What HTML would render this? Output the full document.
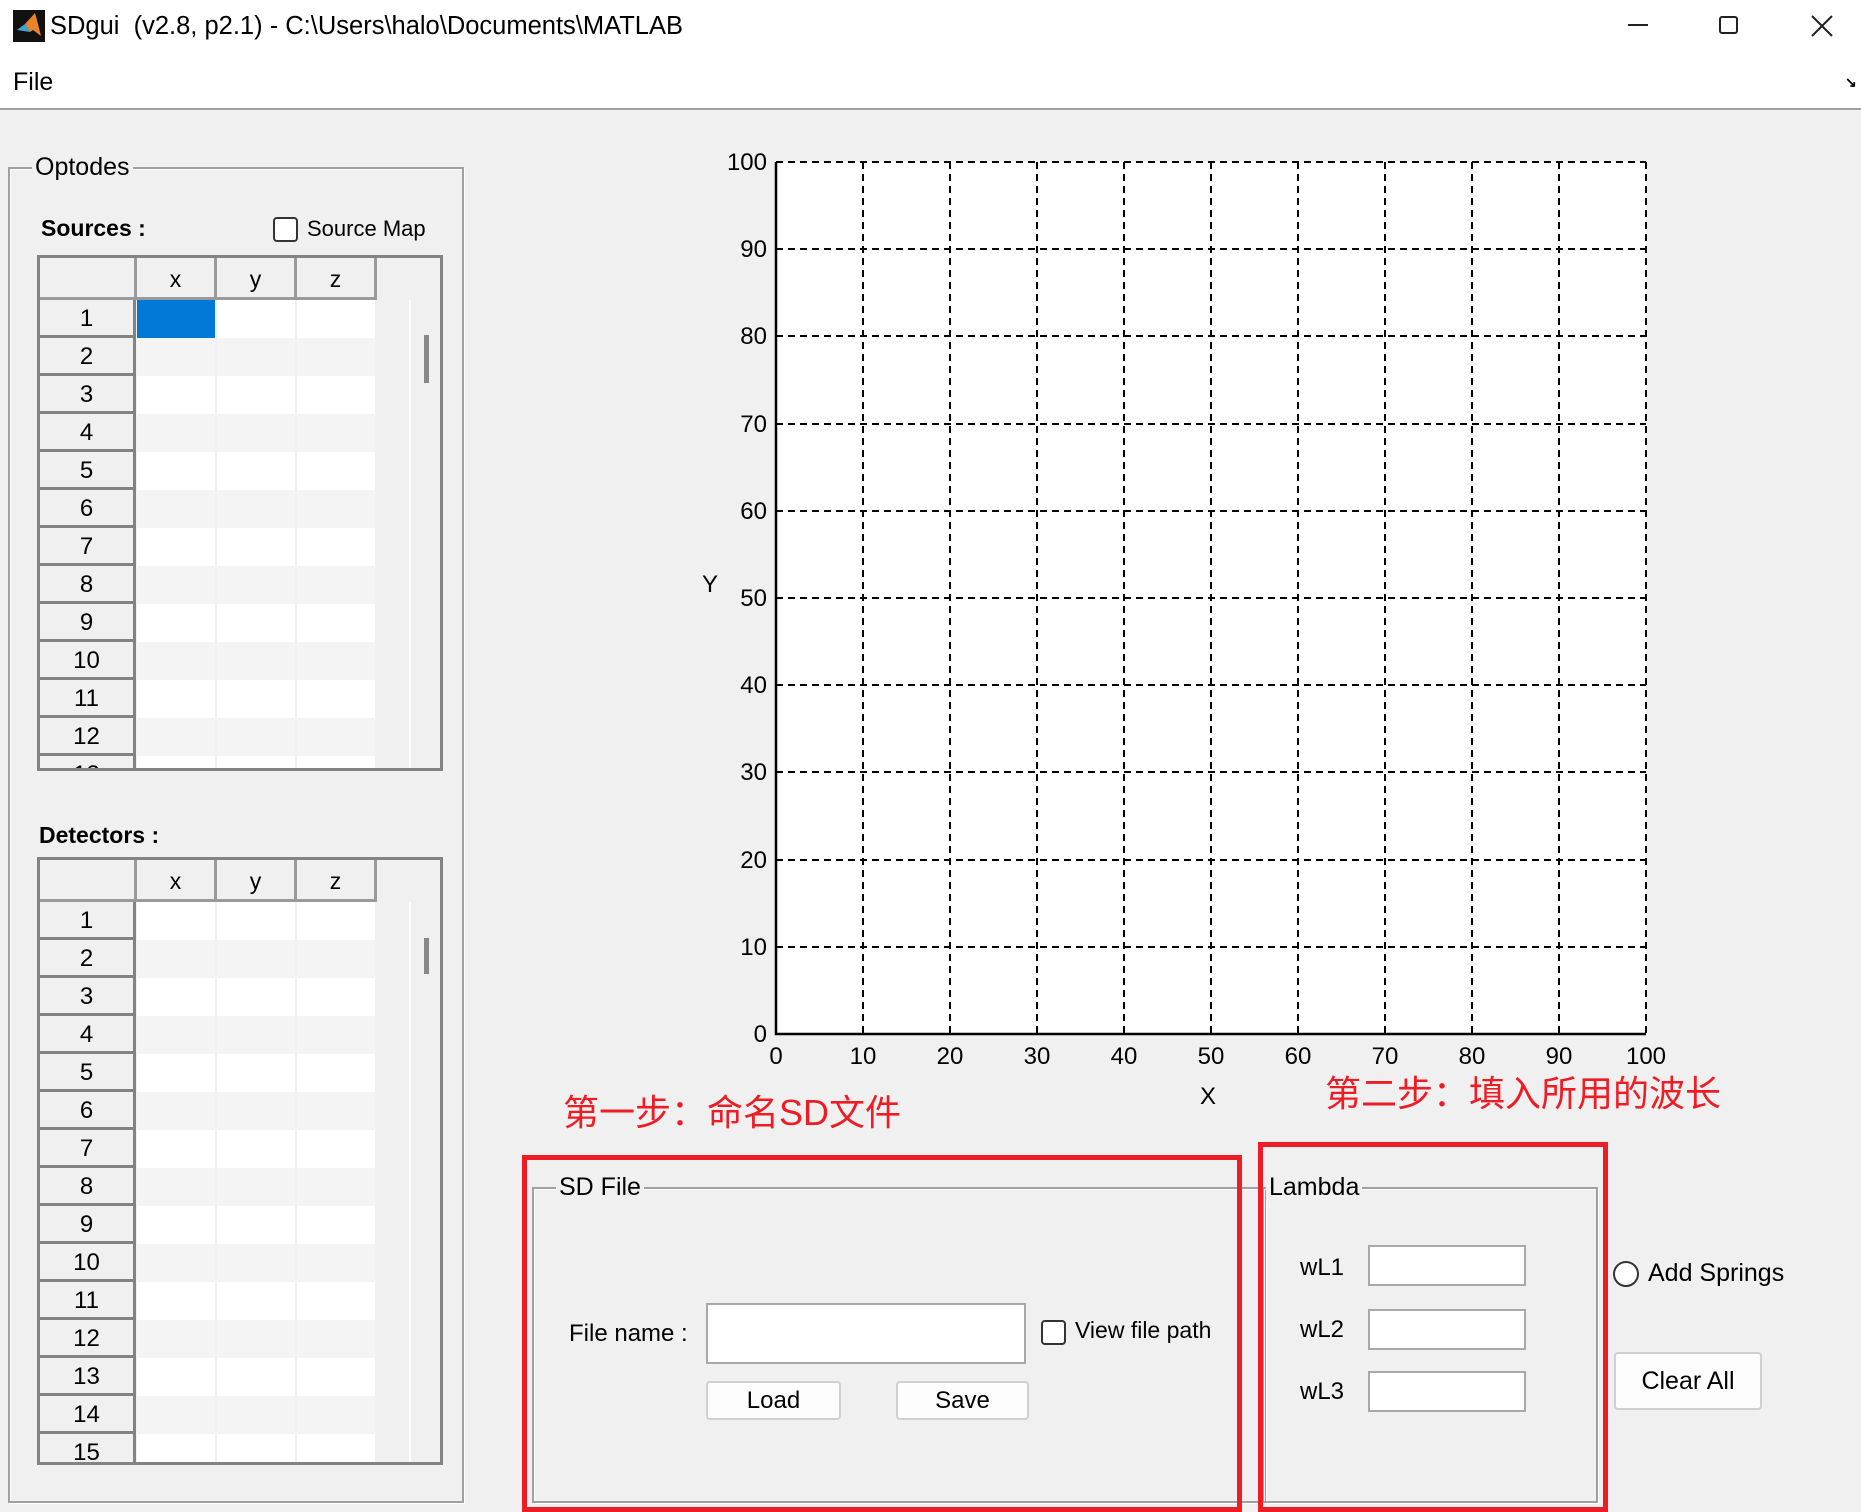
<!DOCTYPE html>
<html><head><meta charset="utf-8"><style>
*{box-sizing:border-box;margin:0;padding:0}
body{width:1861px;height:1512px;background:#f0f0f0;position:relative;overflow:hidden;font-family:"Liberation Sans",Arial,sans-serif;color:#000}
.a{position:absolute}
.gb{position:absolute;border:2px solid #a0a0a0;border-right-color:#a0a0a0;box-shadow:inset 1px 1px 0 #fff,1px 1px 0 #fff}
.gl{position:absolute;background:#f0f0f0;padding:0 3px;font-size:25px;line-height:28px}
.tbl{position:absolute;border:3px solid #838383;background:#f0f0f0;overflow:hidden}
.hd{position:absolute;top:0;height:42px;border-right:3px solid #9a9a9a;border-bottom:3px solid #9a9a9a;font-size:23px;text-align:center;line-height:42px;background:#f0f0f0}
.row{position:absolute;left:0;height:38px;width:340px}
.rn{position:absolute;left:0;top:0;width:96px;height:38px;border-right:3px solid #838383;border-bottom:3px solid #838383;font-size:24px;text-align:center;line-height:38px;background:#f0f0f0}
.c{position:absolute;top:0;height:38px;width:78px;background:#fff}
.row.o .c{background:#f4f4f4}
.inp{position:absolute;background:#fff;border:2px solid #a8a8a8}
.btn{position:absolute;background:#fdfdfd;border:2px solid #d0d0d0;border-radius:4px;font-size:24px;text-align:center}
.cb{position:absolute;width:25px;height:25px;border:2px solid #333;border-radius:4px;background:#fff}
.red{position:absolute;border:5px solid #ee1c25}
.cn{position:absolute;font-size:36px;color:#ee1c25;font-family:'Liberation Sans','Noto Sans CJK SC',sans-serif;line-height:44px}
</style></head><body>
<div class="a" style="left:0;top:0;width:1861px;height:108px;background:#fff"></div>
<div class="a" style="left:0;top:108px;width:1861px;height:2px;background:#a0a0a0"></div>
<svg class="a" style="left:13px;top:10px" width="32" height="32" viewBox="0 0 32 32"><rect width="32" height="32" fill="#111"/><path d="M4 20 L12 14 L17 22 Z" fill="#3aa6d8"/><path d="M12 14 L22 3 L28 26 L20 20 L17 22 Z" fill="#e8822a"/><path d="M22 3 L28 26 L24 12Z" fill="#f7b233"/></svg>
<div class="a" style="left:50px;top:10px;font-size:25.5px;line-height:32px">SDgui&nbsp; (v2.8, p2.1) - C:\Users\halo\Documents\MATLAB</div>
<div class="a" style="left:1628px;top:24px;width:20px;height:2px;background:#222"></div>
<div class="a" style="left:1719px;top:16px;width:19px;height:18px;border:2px solid #222;border-radius:3px"></div>
<svg class="a" style="left:1811px;top:15px" width="22" height="22"><path d="M1 1L21 21M21 1L1 21" stroke="#222" stroke-width="2"/></svg>
<div class="a" style="left:13px;top:67px;font-size:25px;line-height:30px">File</div>
<div class="a" style="left:1845px;top:74px;font-size:14px;font-weight:bold">↘</div>

<div class="gb" style="left:8px;top:167px;width:456px;height:1336px"></div>
<div class="gl" style="left:32px;top:153px">Optodes</div>
<div class="a" style="left:41px;top:215px;font-size:23px;font-weight:bold">Sources :</div>
<div class="cb" style="left:273px;top:217px"></div>
<div class="a" style="left:307px;top:216px;font-size:22px">Source Map</div>

<div class="tbl" style="left:37px;top:255px;width:406px;height:516px">
<div class="hd" style="left:0;width:97px"></div><div class="hd" style="left:97px;width:80px">x</div><div class="hd" style="left:177px;width:80px">y</div><div class="hd" style="left:257px;width:80px">z</div>
<div class="a" style="left:369px;top:42px;width:2px;height:480px;background:#fff"></div>
<div class="a" style="left:384px;top:77px;width:5px;height:48px;background:#888"></div>
<div class="row" style="top:42px"><div class="rn">1</div><div class="c" style="left:97px;background:#0078d7"></div><div class="c" style="left:177px"></div><div class="c" style="left:257px"></div></div>
<div class="row o" style="top:80px"><div class="rn">2</div><div class="c" style="left:97px"></div><div class="c" style="left:177px"></div><div class="c" style="left:257px"></div></div>
<div class="row" style="top:118px"><div class="rn">3</div><div class="c" style="left:97px"></div><div class="c" style="left:177px"></div><div class="c" style="left:257px"></div></div>
<div class="row o" style="top:156px"><div class="rn">4</div><div class="c" style="left:97px"></div><div class="c" style="left:177px"></div><div class="c" style="left:257px"></div></div>
<div class="row" style="top:194px"><div class="rn">5</div><div class="c" style="left:97px"></div><div class="c" style="left:177px"></div><div class="c" style="left:257px"></div></div>
<div class="row o" style="top:232px"><div class="rn">6</div><div class="c" style="left:97px"></div><div class="c" style="left:177px"></div><div class="c" style="left:257px"></div></div>
<div class="row" style="top:270px"><div class="rn">7</div><div class="c" style="left:97px"></div><div class="c" style="left:177px"></div><div class="c" style="left:257px"></div></div>
<div class="row o" style="top:308px"><div class="rn">8</div><div class="c" style="left:97px"></div><div class="c" style="left:177px"></div><div class="c" style="left:257px"></div></div>
<div class="row" style="top:346px"><div class="rn">9</div><div class="c" style="left:97px"></div><div class="c" style="left:177px"></div><div class="c" style="left:257px"></div></div>
<div class="row o" style="top:384px"><div class="rn">10</div><div class="c" style="left:97px"></div><div class="c" style="left:177px"></div><div class="c" style="left:257px"></div></div>
<div class="row" style="top:422px"><div class="rn">11</div><div class="c" style="left:97px"></div><div class="c" style="left:177px"></div><div class="c" style="left:257px"></div></div>
<div class="row o" style="top:460px"><div class="rn">12</div><div class="c" style="left:97px"></div><div class="c" style="left:177px"></div><div class="c" style="left:257px"></div></div>
<div class="row" style="top:498px"><div class="rn">13</div><div class="c" style="left:97px"></div><div class="c" style="left:177px"></div><div class="c" style="left:257px"></div></div>
</div>

<div class="a" style="left:39px;top:822px;font-size:23px;font-weight:bold">Detectors :</div>
<div class="tbl" style="left:37px;top:857px;width:406px;height:608px">
<div class="hd" style="left:0;width:97px"></div><div class="hd" style="left:97px;width:80px">x</div><div class="hd" style="left:177px;width:80px">y</div><div class="hd" style="left:257px;width:80px">z</div>
<div class="a" style="left:369px;top:42px;width:2px;height:600px;background:#fff"></div>
<div class="a" style="left:384px;top:78px;width:5px;height:36px;background:#888"></div>
<div class="row" style="top:42px"><div class="rn">1</div><div class="c" style="left:97px"></div><div class="c" style="left:177px"></div><div class="c" style="left:257px"></div></div>
<div class="row o" style="top:80px"><div class="rn">2</div><div class="c" style="left:97px"></div><div class="c" style="left:177px"></div><div class="c" style="left:257px"></div></div>
<div class="row" style="top:118px"><div class="rn">3</div><div class="c" style="left:97px"></div><div class="c" style="left:177px"></div><div class="c" style="left:257px"></div></div>
<div class="row o" style="top:156px"><div class="rn">4</div><div class="c" style="left:97px"></div><div class="c" style="left:177px"></div><div class="c" style="left:257px"></div></div>
<div class="row" style="top:194px"><div class="rn">5</div><div class="c" style="left:97px"></div><div class="c" style="left:177px"></div><div class="c" style="left:257px"></div></div>
<div class="row o" style="top:232px"><div class="rn">6</div><div class="c" style="left:97px"></div><div class="c" style="left:177px"></div><div class="c" style="left:257px"></div></div>
<div class="row" style="top:270px"><div class="rn">7</div><div class="c" style="left:97px"></div><div class="c" style="left:177px"></div><div class="c" style="left:257px"></div></div>
<div class="row o" style="top:308px"><div class="rn">8</div><div class="c" style="left:97px"></div><div class="c" style="left:177px"></div><div class="c" style="left:257px"></div></div>
<div class="row" style="top:346px"><div class="rn">9</div><div class="c" style="left:97px"></div><div class="c" style="left:177px"></div><div class="c" style="left:257px"></div></div>
<div class="row o" style="top:384px"><div class="rn">10</div><div class="c" style="left:97px"></div><div class="c" style="left:177px"></div><div class="c" style="left:257px"></div></div>
<div class="row" style="top:422px"><div class="rn">11</div><div class="c" style="left:97px"></div><div class="c" style="left:177px"></div><div class="c" style="left:257px"></div></div>
<div class="row o" style="top:460px"><div class="rn">12</div><div class="c" style="left:97px"></div><div class="c" style="left:177px"></div><div class="c" style="left:257px"></div></div>
<div class="row" style="top:498px"><div class="rn">13</div><div class="c" style="left:97px"></div><div class="c" style="left:177px"></div><div class="c" style="left:257px"></div></div>
<div class="row o" style="top:536px"><div class="rn">14</div><div class="c" style="left:97px"></div><div class="c" style="left:177px"></div><div class="c" style="left:257px"></div></div>
<div class="row" style="top:574px"><div class="rn">15</div><div class="c" style="left:97px"></div><div class="c" style="left:177px"></div><div class="c" style="left:257px"></div></div>
</div>

<svg class="a" style="left:0;top:0" width="1861" height="1512" font-family="Liberation Sans, Arial, sans-serif" font-size="24">
<rect x="776" y="162" width="870" height="872" fill="#fff"/>
<g stroke="#000" stroke-width="2" stroke-dasharray="7,5" fill="none">
<path d="M863 162V1034M950 162V1034M1037 162V1034M1124 162V1034M1211 162V1034M1298 162V1034M1385 162V1034M1472 162V1034M1559 162V1034M1646 162V1034"/>
<path d="M776 162H1646M776 249H1646M776 336H1646M776 424H1646M776 511H1646M776 598H1646M776 685H1646M776 772H1646M776 860H1646M776 947H1646"/>
</g>
<path d="M776 162V1034H1646" stroke="#000" stroke-width="2.5" fill="none"/>
<g text-anchor="end">
<text x="767" y="170">100</text><text x="767" y="257">90</text><text x="767" y="344">80</text><text x="767" y="432">70</text><text x="767" y="519">60</text><text x="767" y="606">50</text><text x="767" y="693">40</text><text x="767" y="780">30</text><text x="767" y="868">20</text><text x="767" y="955">10</text><text x="767" y="1042">0</text>
</g>
<g text-anchor="middle">
<text x="776" y="1064">0</text><text x="863" y="1064">10</text><text x="950" y="1064">20</text><text x="1037" y="1064">30</text><text x="1124" y="1064">40</text><text x="1211" y="1064">50</text><text x="1298" y="1064">60</text><text x="1385" y="1064">70</text><text x="1472" y="1064">80</text><text x="1559" y="1064">90</text><text x="1646" y="1064">100</text>
<text x="1208" y="1104">X</text><text x="710" y="592">Y</text>
</g>
</svg>

<div class="cn" style="left:563px;top:1091px">第一步：命名SD文件</div>
<div class="cn" style="left:1325px;top:1072px">第二步：填入所用的波长</div>

<div class="gb" style="left:532px;top:1187px;width:734px;height:316px"></div>
<div class="gl" style="left:556px;top:1173px">SD File</div>
<div class="a" style="left:569px;top:1320px;font-size:24px">File name :</div>
<div class="inp" style="left:706px;top:1303px;width:320px;height:61px"></div>
<div class="cb" style="left:1041px;top:1320px"></div>
<div class="a" style="left:1075px;top:1317px;font-size:23px">View file path</div>
<div class="btn" style="left:706px;top:1381px;width:135px;height:39px;line-height:35px">Load</div>
<div class="btn" style="left:896px;top:1381px;width:133px;height:39px;line-height:35px">Save</div>

<div class="gb" style="left:1262px;top:1187px;width:336px;height:316px"></div>
<div class="gl" style="left:1266px;top:1173px">Lambda</div>
<div class="a" style="left:1300px;top:1254px;font-size:24px">wL1</div>
<div class="inp" style="left:1368px;top:1245px;width:158px;height:41px"></div>
<div class="a" style="left:1300px;top:1316px;font-size:24px">wL2</div>
<div class="inp" style="left:1368px;top:1309px;width:158px;height:41px"></div>
<div class="a" style="left:1300px;top:1378px;font-size:24px">wL3</div>
<div class="inp" style="left:1368px;top:1371px;width:158px;height:41px"></div>

<div class="a" style="left:1613px;top:1261px;width:26px;height:26px;border:2px solid #333;border-radius:50%;background:#fff"></div>
<div class="a" style="left:1648px;top:1259px;font-size:25px">Add Springs</div>
<div class="btn" style="left:1614px;top:1352px;width:148px;height:58px;line-height:54px;font-size:25px">Clear All</div>

<div class="red" style="left:522px;top:1155px;width:720px;height:357px"></div>
<div class="red" style="left:1258px;top:1142px;width:350px;height:370px"></div>
</body></html>
